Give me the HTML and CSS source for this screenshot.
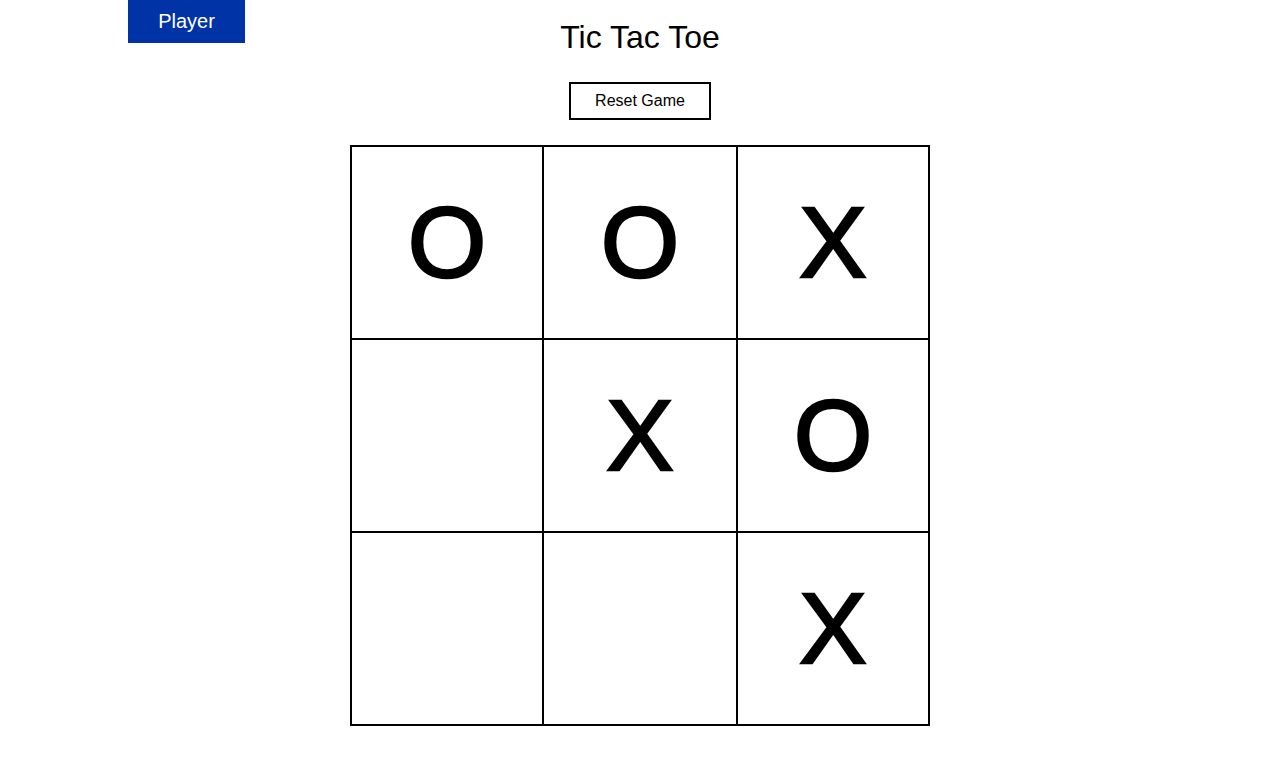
FILE: index.html
```html
<!DOCTYPE html>
<html lang="en">
<head>
<meta charset="utf-8">
<title>Tic Tac Toe</title>
<link rel="stylesheet" href="styles.css">
</head>
<body>
<div class="player">Player</div>
<main class="game">
  <h1 class="title">Tic Tac Toe</h1>
  <button class="reset">Reset Game</button>
  <div class="board">
    <div class="cell">O</div>
    <div class="cell">O</div>
    <div class="cell">X</div>
    <div class="cell"></div>
    <div class="cell">X</div>
    <div class="cell">O</div>
    <div class="cell"></div>
    <div class="cell"></div>
    <div class="cell">X</div>
  </div>
</main>
</body>
</html>
```
FILE: styles.css
```css
html, body {
  margin: 0;
  padding: 0;
  background: #ffffff;
  font-family: "Liberation Sans", Arial, sans-serif;
  color: #000000;
}

.player {
  position: absolute;
  top: 0;
  left: 128px;
  width: 117px;
  height: 43px;
  background: #0033a6;
  color: #ffffff;
  font-size: 20px;
  display: flex;
  align-items: center;
  justify-content: center;
}

.game {
  display: flex;
  flex-direction: column;
  align-items: center;
}

.title {
  margin: 19px 0 0 0;
  font-size: 32px;
  font-weight: normal;
  line-height: 37px;
}

.reset {
  margin-top: 26px;
  box-sizing: border-box;
  width: 142px;
  height: 38px;
  border: 2px solid #000000;
  background: #ffffff;
  font-family: "Liberation Sans", Arial, sans-serif;
  font-size: 16px;
  color: #000000;
  padding: 0;
}

.board {
  margin-top: 25px;
  display: grid;
  grid-template-columns: 192px 194px 192px;
  grid-template-rows: 193px 193px 193px;
  border-left: 2px solid #000000;
  border-top: 2px solid #000000;
}

.cell {
  box-sizing: border-box;
  border-right: 2px solid #000000;
  border-bottom: 2px solid #000000;
  display: flex;
  align-items: center;
  justify-content: center;
  font-size: 101px;
  font-weight: normal;
  line-height: 1;
  -webkit-text-stroke: 2.5px #000000;
}
```
